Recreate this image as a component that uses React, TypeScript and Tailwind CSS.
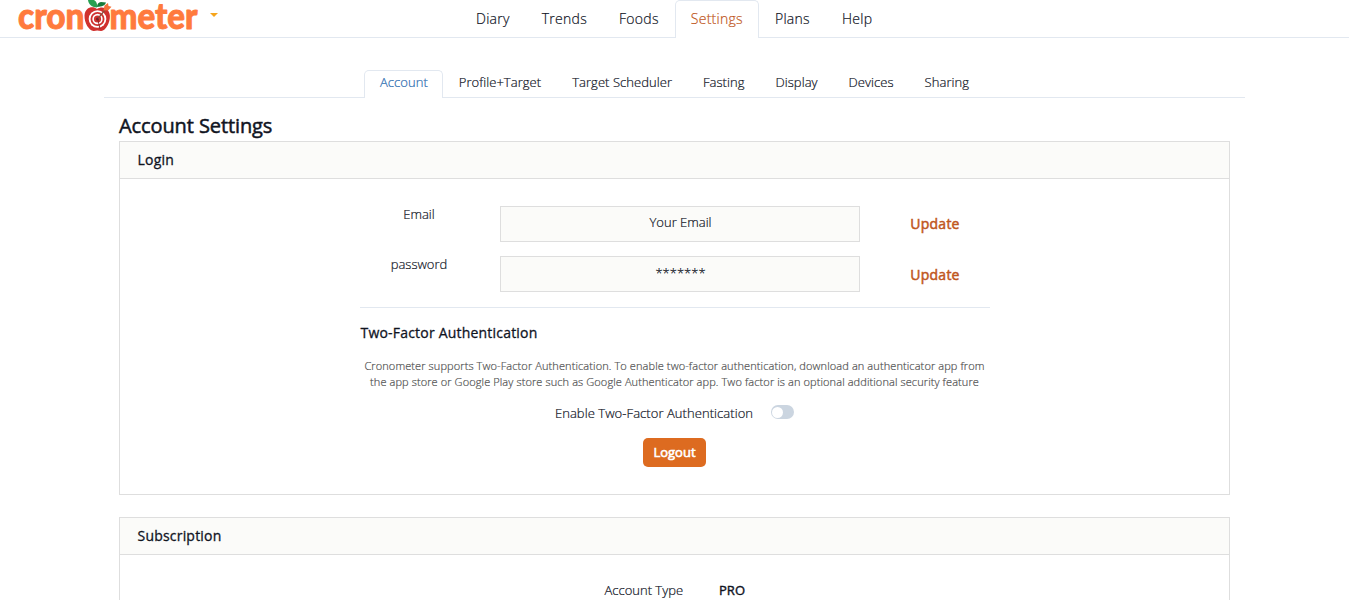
import React from "react";

const mainTabs = ["Diary", "Trends", "Foods", "Settings", "Plans", "Help"];
const subTabs = ["Account", "Profile+Target", "Target Scheduler", "Fasting", "Display", "Devices", "Sharing"];

function Logo() {
  return (
    <svg width="182" height="37" viewBox="17 0 182 37" className="block overflow-visible">
      <g fill="#ff7a3d" stroke="#ff7a3d" strokeWidth="0.9" strokeLinejoin="round" fontFamily="Lato, sans-serif" fontWeight="900" fontSize="36">
        <text x="18" y="29" textLength="66.500" lengthAdjust="spacingAndGlyphs">cron</text>
        <text x="109.500" y="29" textLength="88" lengthAdjust="spacingAndGlyphs">meter</text>
      </g>
      <path d="M97 9c-4-3.500-12-2-12.500 6.500C84.200 23 89 30.500 93.500 31c1.500.1 2.500-.4 3.800-.4s2.400.5 4 .4c4.500-.7 8.900-8 8.600-15.300C109.500 8 102 5.500 97 9z" fill="#d0312f" />
      <circle cx="97.500" cy="19" r="8.800" fill="#fff" />
      <circle cx="97.500" cy="19" r="7" fill="#d0312f" />
      <circle cx="97.500" cy="19" r="5.200" fill="#fff" />
      <circle cx="97.500" cy="19" r="3.600" fill="#d0312f" />
      <circle cx="97.500" cy="19" r="1.500" fill="#7a1f25" />
      <path d="M98 18.500l7-8.500" stroke="#8a4a3a" strokeWidth="1.200" />
      <path d="M98 20l2 9" stroke="#8a2020" strokeWidth="0.900" />
      <path d="M103.500 10.500l1-5 3.500-2.500.5 3 3 .8-3.200 3.500z" fill="#f4703a" />
      <path d="M97 7.500C91 7 88.500 4 88 0h6c2.500 1.500 3.500 4 3 7.500z" fill="#27a052" />
      <path d="M97 7c0-3 1.500-4.500 4-5l5 .5c-1 3-4 4.200-9 4.500z" fill="#167a3c" />
    </svg>
  );
}

function Panel({ title, className, children }: { title: string; className: string; children: React.ReactNode }) {
  return (
    <section className={"border border-[#dedede] " + className}>
      <h2 className="h-[37px] border-b border-[#dedede] bg-[#fbfbf9] pl-[17.5px] text-[14px] leading-[36px] font-normal tracking-[0.2px] [-webkit-text-stroke:0.3px]">{title}</h2>
      {children}
    </section>
  );
}

function Row({ label, value, className, valueClass, buttonClass }: { label: string; value: string; className: string; valueClass: string; buttonClass: string }) {
  return (
    <div className={"flex " + className}>
      <span className="w-[119px] text-center leading-[16px]">{label}</span>
      <div className={"ml-[21px] h-9 w-[360px] border border-[#dedede] bg-[#fbfbf9] pl-[2px] text-center " + valueClass}>{value}</div>
      <button className={"ml-[25px] w-[101px] text-[14px] font-normal tracking-[0.25px] text-[#c05621] [-webkit-text-stroke:0.5px] " + buttonClass}>Update</button>
    </div>
  );
}

export default function App() {
  return (
    <div className="h-[600px] w-full overflow-hidden bg-white font-['Open_Sans',sans-serif] text-[13px] font-light text-[#10141f] [-webkit-text-stroke:0.2px]">
      <header className="flex h-[38px] border-b border-[#e2e8f0]">
        <div className="flex w-[460px] shrink-0 pl-[17px]">
          <Logo />
          <span className="mt-[13px] ml-[11px] h-0 w-0 border-x-4 border-t-4 border-x-transparent border-t-[#f6a51c]" />
        </div>
        <nav className="flex h-[38px] text-[14px] leading-[36px] tracking-[0.28px]">
          {mainTabs.map((t) => (
            <a key={t} className={t === "Settings" ? "rounded-t-[5px] border border-b-0 border-[#e2e8f0] bg-white px-[15px] text-[#c05621]" : "border border-transparent px-[15px]"}>{t}</a>
          ))}
        </nav>
      </header>
      <main className="mx-[104px] mt-8">
        <nav className="flex h-7 justify-center border-b border-[#e2e8f0] leading-[23px] tracking-[0.05px]">
          {subTabs.map((t) => (
            <a key={t} className={t === "Account" ? "h-7 rounded-t-[5px] border border-b-0 border-[#e2e8f0] bg-white px-[14.5px] text-[#2b6cb0]" : "h-7 border border-transparent px-[14.5px]"}>{t}</a>
          ))}
        </nav>
        <div className="mx-[15px]">
          <h1 className="h-[43px] pt-[14px] text-[20px] leading-[28px] font-normal tracking-[-0.1px] [-webkit-text-stroke:0.5px]">Account Settings</h1>
          <Panel title="Login" className="h-[354px]">
            <div className="mx-auto w-[630px] pt-[27px]">
              <Row label="Email" value="Your Email" className="h-[50px]" valueClass="leading-[31px]" buttonClass="h-[35px]" />
              <Row label="password" value="*******" className="box-content h-[51px] border-b border-[#e2e8f0]" valueClass="leading-[33px]" buttonClass="h-[37px]" />
              <h3 className="mt-[14px] pl-px text-[14px] leading-[22px] font-normal tracking-[0.2px] [-webkit-text-stroke:0.3px]">Two-Factor Authentication</h3>
              <p className="mt-[14px] text-center text-[11px] leading-[16px] tracking-[0.1px] whitespace-nowrap text-[#505050]">
                Cronometer supports Two-Factor Authentication. To enable two-factor authentication, download an authenticator app from
                <br />
                the app store or Google Play store such as Google Authenticator app. Two factor is an optional additional security feature
              </p>
              <div className="mt-[13px] flex h-[20px] justify-center gap-[18px]">
                <span className="leading-[21px] tracking-[0.06px]">Enable Two-Factor Authentication</span>
                <span className="mt-[2px] flex h-[14px] w-[23px] items-center rounded-full bg-[#cbd5e0] pl-[1px]">
                  <span className="h-[11px] w-[11px] rounded-full bg-white" />
                </span>
              </div>
              <button className="mx-auto mt-[15px] block h-[29px] w-[63px] rounded-[5px] bg-[#dd6b20] text-[13px] font-normal text-white [-webkit-text-stroke:0.6px]">Logout</button>
            </div>
          </Panel>
          <Panel title="Subscription" className="mt-[22px] h-[300px]">
            <div className="flex gap-[36px] pt-[26px] pl-[484.5px] leading-[18px]">
              <span>Account Type</span>
              <span className="font-normal [-webkit-text-stroke:0.4px]">PRO</span>
            </div>
          </Panel>
        </div>
      </main>
    </div>
  );
}
